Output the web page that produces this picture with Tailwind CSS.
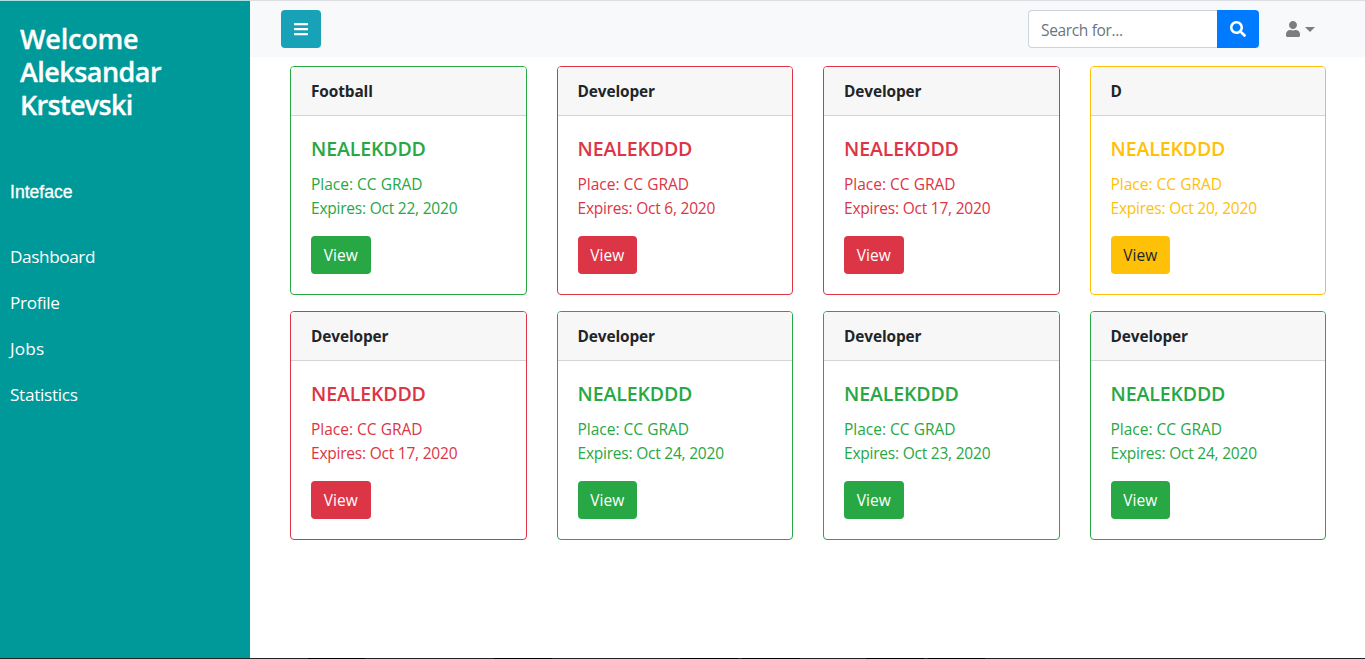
<!DOCTYPE html>
<html lang="en">
<head>
<meta charset="utf-8">
<title>Dashboard</title>
<script src="https://cdn.jsdelivr.net/npm/@tailwindcss/browser@4"></script>
</head>
<body class="h-[659px] overflow-hidden bg-white font-['Open_Sans',sans-serif] text-base text-[#212529] flex flex-col">
<div class="h-px shrink-0 flex"><div class="w-[250px] bg-[#a9dfe0]"></div><div class="flex-1 bg-[#dcdee3]"></div></div>
<div class="flex-1 min-h-0 flex">
  <aside class="w-[250px] shrink-0 bg-[#009999] text-white">
    <h3 class="px-5 pt-[21px] text-[27px] leading-[33px] font-semibold [-webkit-text-stroke:0.3px_white]"><span class="block tracking-[-0.2px]">Welcome</span><span class="block tracking-[-0.55px]">Aleksandar</span><span class="block tracking-[-0.7px]">Krstevski</span></h3>
    <p class="mt-[58px] px-2.5 font-['Liberation_Sans',sans-serif] text-[17.6px] leading-[26px] [-webkit-text-stroke:0.3px_white]">Inteface</p>
    <nav class="mt-[29px] text-[17.2px]">
      <a class="block h-[46px] px-2.5 leading-[46px] tracking-[-0.4px]">Dashboard</a>
      <a class="block h-[46px] px-2.5 leading-[46px] tracking-[-0.3px]">Profile</a>
      <a class="block h-[46px] px-2.5 leading-[46px] tracking-[0.2px]">Jobs</a>
      <a class="block h-[46px] px-2.5 leading-[46px] tracking-[-0.3px]">Statistics</a>
    </nav>
  </aside>
  <main class="flex-1 min-w-0">
    <header class="h-14 bg-[#f8f9fa] flex items-center pl-[31px] pr-[50px]">
      <button class="w-10 h-[38px] rounded bg-[#17a2b8] flex items-center justify-center" aria-label="Menu">
        <svg width="14" height="16" viewBox="0 0 448 512" fill="#fff"><path d="M16 132h416c8.837 0 16-7.163 16-16V76c0-8.837-7.163-16-16-16H16C7.163 60 0 67.163 0 76v40c0 8.837 7.163 16 16 16zm0 160h416c8.837 0 16-7.163 16-16v-40c0-8.837-7.163-16-16-16H16c-8.837 0-16 7.163-16 16v40c0 8.837 7.163 16 16 16zm0 160h416c8.837 0 16-7.163 16-16v-40c0-8.837-7.163-16-16-16H16c-8.837 0-16 7.163-16 16v40c0 8.837 7.163 16 16 16z"/></svg>
      </button>
      <div class="ml-auto flex h-[38px]">
        <div class="w-[189px] bg-white border border-r-0 border-[#ced4da] rounded-l px-3 leading-[38px] text-[15.5px] tracking-[-0.35px] text-[#6c757d]">Search for...</div>
        <button class="w-[42px] rounded-r bg-[#007bff] flex items-center justify-center" aria-label="Search">
          <svg width="16" height="16" viewBox="0 0 512 512" fill="#fff"><path d="M505 442.7L405.3 343c-4.5-4.5-10.6-7-17-7H372c27.6-35.3 44-79.7 44-128C416 93.1 322.9 0 208 0S0 93.1 0 208s93.1 208 208 208c48.3 0 92.7-16.4 128-44v16.3c0 6.4 2.5 12.5 7 17l99.7 99.7c9.4 9.4 24.6 9.4 33.9 0l28.3-28.3c9.4-9.4 9.4-24.6.1-34zM208 336c-70.7 0-128-57.2-128-128 0-70.7 57.2-128 128-128 70.7 0 128 57.2 128 128 0 70.7-57.2 128-128 128z"/></svg>
        </button>
      </div>
      <div class="ml-[27px] flex items-center gap-[5px]">
        <svg width="14" height="16" viewBox="0 0 448 512" fill="#7c7d7e"><path d="M224 256c70.7 0 128-57.3 128-128S294.7 0 224 0 96 57.3 96 128s57.3 128 128 128zm89.6 32h-16.7c-22.2 10.2-46.9 16-72.9 16s-50.6-5.8-72.9-16h-16.7C60.2 288 0 348.2 0 422.4V464c0 26.5 21.5 48 48 48h352c26.5 0 48-21.5 48-48v-41.6c0-74.2-60.2-134.4-134.4-134.4z"/></svg>
        <svg width="10" height="5" viewBox="0 0 10 5" fill="#7c7d7e"><path d="M0 0h10L5 5z"/></svg>
      </div>
    </header>
    <div id="cards" class="pt-[9px] pl-10 pr-[39px] grid grid-cols-4 gap-x-[30px] gap-y-4"></div>
  </main>
</div>
<div class="h-px shrink-0 flex bg-[#222222]">
  <div class="ml-[308px] w-[57px] bg-black"></div>
  <div class="ml-[129px] w-[58px] bg-black"></div>
  <div class="ml-[128px] w-[58px] bg-black"></div>
  <div class="ml-1 w-[58px] bg-black"></div>
  <div class="ml-[66px] w-[58px] bg-black"></div>
  <div class="ml-1 w-[57px] bg-black"></div>
</div>
<script>
const themes = {
  green: { card: 'border-[#28a745] text-[#28a745]', btn: 'bg-[#28a745] text-white' },
  red: { card: 'border-[#dc3545] text-[#dc3545]', btn: 'bg-[#dc3545] text-white' },
  yellow: { card: 'border-[#ffc107] text-[#ffc107]', btn: 'bg-[#ffc107] text-[#212529]' }
};
const jobs = [
  ['Football', 'Oct 22, 2020', 'green'],
  ['Developer', 'Oct 6, 2020', 'red'],
  ['Developer', 'Oct 17, 2020', 'red'],
  ['D', 'Oct 20, 2020', 'yellow'],
  ['Developer', 'Oct 17, 2020', 'red'],
  ['Developer', 'Oct 24, 2020', 'green'],
  ['Developer', 'Oct 23, 2020', 'green'],
  ['Developer', 'Oct 24, 2020', 'green']
];
document.getElementById('cards').innerHTML = jobs.map(([title, date, t]) => `
  <article class="h-[229px] rounded border overflow-hidden ${themes[t].card}">
    <div class="h-[49px] px-5 bg-[#f7f7f7] border-b border-[#d4d4d4] leading-[50px] text-[15.4px] font-bold tracking-[-0.1px] text-[#212529]">${title}</div>
    <div class="px-5 pt-[21px]">
      <h5 class="mb-[11px] text-[19.5px] leading-6 font-semibold tracking-[-0.12px]">NEALEKDDD</h5>
      <p class="mb-4 text-[15.5px] leading-6"><span class="block">Place: CC GRAD</span><span class="block tracking-[-0.22px]">Expires: ${date}</span></p>
      <button class="block w-[59.5px] h-[38px] rounded text-[15.5px] leading-[38px] ${themes[t].btn}">View</button>
    </div>
  </article>`).join('');
</script>
</body>
</html>
